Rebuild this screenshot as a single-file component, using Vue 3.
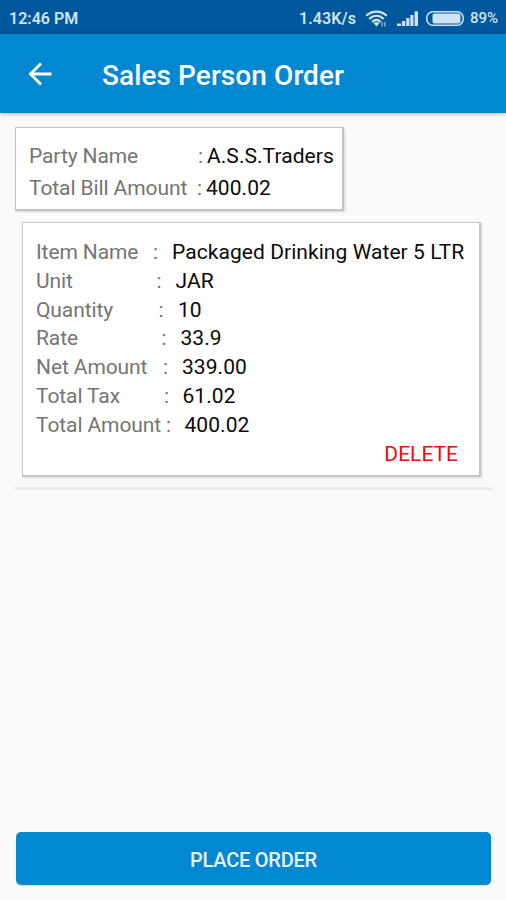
<script setup>
const summary = [
  { label: 'Party Name', value: 'A.S.S.Traders', colon: 169, width: 9 },
  { label: 'Total Bill Amount', value: '400.02', colon: 168, width: 9 },
]

const details = [
  { label: 'Item Name', value: 'Packaged Drinking Water 5 LTR', colon: 117, width: 19 },
  { label: 'Unit', value: 'JAR', colon: 120.5, width: 19 },
  { label: 'Quantity', value: '10', colon: 122.5, width: 19.5 },
  { label: 'Rate', value: '33.9', colon: 125.5, width: 19 },
  { label: 'Net Amount', value: '339.00', colon: 127, width: 19 },
  { label: 'Total Tax', value: '61.02', colon: 128, width: 18.5 },
  { label: 'Total Amount', value: '400.02', colon: 130, width: 18.5 },
]
</script>

<template>
  <div class="screen">
    <div class="status">
      <span class="time">12:46 PM</span>
      <span class="speed">1.43K/s</span>
      <svg class="wifi" width="23" height="17" viewBox="0 0 23 17" fill="none" stroke="currentColor">
        <path d="M1.200 5.700C7.300.2 15.700.2 21.800 5.700M4.200 9C8.700 4.800 14.300 4.800 18.800 9M7.200 12C10 9.300 13 9.300 15.800 12" stroke-width="2.100" />
        <path d="M8.500 13.300Q11.500 10.800 14.500 13.300L11.500 16.500Z" fill="currentColor" stroke="none" />
        <path d="M17.200 12v4.500M19.800 12v4.500" stroke-width="1.500" opacity=".6" />
      </svg>
      <svg class="signal" width="22" height="15" viewBox="0 0 22 15" fill="currentColor">
        <path d="M0 12.500h4V15H0zM5 10h3.200v5H5zM9.200 7h3.200v8H9.200zM13.300 4h3.200v11h-3.200zM17.600.3H21V15h-3.400z" />
      </svg>
      <svg class="battery" width="38" height="15" viewBox="0 0 38 15">
        <rect x=".8" y=".8" width="36.400" height="13.400" rx="6" fill="none" stroke="currentColor" stroke-width="1.500" />
        <rect x="6.500" y="2.500" width="28" height="10" rx="2" fill="currentColor" />
      </svg>
      <span class="percent">89%</span>
    </div>

    <header class="bar">
      <svg class="back" width="24" height="24" viewBox="0 0 24 24" fill="none" stroke="#fff" stroke-width="2.800">
        <path d="M23.500 12H2.500M13 1.500L2.500 12L13 22.500" />
      </svg>
      <h1>Sales Person Order</h1>
    </header>

    <main>
      <section class="card summary">
        <div v-for="row in summary" :key="row.label" class="row">
          <span class="label" :style="{ width: row.colon + 'px' }">{{ row.label }}</span>
          <span class="colon" :style="{ width: row.width + 'px' }">:</span>
          <span class="value">{{ row.value }}</span>
        </div>
      </section>

      <section class="card item">
        <div v-for="row in details" :key="row.label" class="row">
          <span class="label" :style="{ width: row.colon + 'px' }">{{ row.label }}</span>
          <span class="colon" :style="{ width: row.width + 'px' }">:</span>
          <span class="value">{{ row.value }}</span>
        </div>
        <button class="delete">DELETE</button>
      </section>
      <div class="divider"></div>
    </main>

    <button class="place">PLACE ORDER</button>
  </div>
</template>

<style>
body {
  margin: 0;
  background: #fafafa;
}
</style>

<style scoped>
.screen {
  box-sizing: border-box;
  width: 506px;
  height: 900px;
  overflow: hidden;
  display: flex;
  flex-direction: column;
  background: #fafafa;
  font-family: Roboto, sans-serif;
}
.status {
  box-sizing: border-box;
  flex: none;
  height: 34px;
  padding: 2px 8px 0 9px;
  display: flex;
  align-items: center;
  background: #01579b;
  color: #cfe3f5;
  font-size: 16px;
  font-weight: 500;
  white-space: nowrap;
}
.time {
  width: 290px;
  font-weight: 600;
  letter-spacing: 0;
}
.speed {
  width: 66px;
  letter-spacing: 0.1px;
  font-weight: 600;
}
.wifi {
  width: 23px;
  margin-right: 9px;
}
.signal {
  margin-right: 7px;
}
.battery {
  margin-right: 6px;
}
.percent {
  font-size: 15px;
}
.bar {
  box-sizing: border-box;
  flex: none;
  height: 79px;
  padding: 2px 0 0 28px;
  display: flex;
  align-items: center;
  background: #0288d1;
  box-shadow: 0 1px 4px rgba(0, 0, 0, 0.3);
}
.back {
  margin-top: -1px;
}
h1 {
  margin: 2px 0 0 50px;
  color: #fff;
  font-size: 28px;
  font-weight: 500;
  line-height: 36px;
  letter-spacing: 0.08px;
  white-space: nowrap;
}
main {
  flex: 1;
  padding: 14px 14px 0 15px;
}
.card {
  box-sizing: border-box;
  background: #fff;
  border: 1px solid #c4c4c4;
  border-right-width: 2px;
  border-bottom-width: 2px;
  box-shadow: 1px 1px 2px rgba(0, 0, 0, 0.14);
}
.row {
  display: flex;
  font-size: 21px;
  white-space: nowrap;
}
.label,
.colon {
  flex: none;
  color: #757575;
}
.label {
  letter-spacing: -0.1px;
}
.value {
  color: #0a0a0a;
  letter-spacing: 0.06px;
}
.summary {
  width: 329px;
  height: 84px;
  padding: 13px 0 0 13px;
}
.summary .row {
  line-height: 31.7px;
}
.item {
  width: 459px;
  height: 255px;
  margin: 11px 0 0 7px;
  padding: 15px 0 0 13px;
}
.item .row {
  line-height: 28.8px;
}
button {
  border: 0;
  font-family: inherit;
}
.delete {
  display: block;
  margin: 0 21px 0 auto;
  padding: 0;
  background: none;
  color: #ee0a10;
  font-size: 21px;
  line-height: 29px;
}
.divider {
  height: 3px;
  margin-top: 10px;
  background: #ececec;
}
.place {
  flex: none;
  height: 53px;
  margin: 0 15px 15px 16px;
  padding: 2px 0 0;
  border-radius: 5px;
  background: #0288d1;
  box-shadow: 0 1px 1px rgba(0, 0, 0, 0.12);
  color: #e9f5ff;
  font-size: 20px;
  font-weight: 500;
  letter-spacing: -0.25px;
}
</style>
